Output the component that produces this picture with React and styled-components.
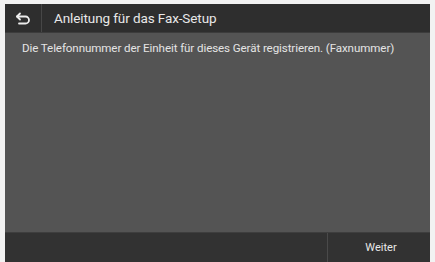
import styled, { createGlobalStyle } from "styled-components";

const GlobalStyle = createGlobalStyle`
  html, body {
    margin: 0;
    padding: 0;
    background: #f2f2f2;
  }
  body {
    font-family: Roboto, "Liberation Sans", sans-serif;
  }
`;

const Frame = styled.div`
  width: 435px;
  height: 262px;
  box-sizing: border-box;
  padding: 4px 5px 0 5px;
  display: flex;
`;

const Screen = styled.div`
  flex: 1;
  display: flex;
  flex-direction: column;
  background: #545454;
  overflow: hidden;
`;

const Header = styled.div`
  height: 28px;
  display: flex;
  align-items: stretch;
  background: #2e2e2e;
  border-bottom: 1px solid #3c3c3c;
`;

const BackButton = styled.div`
  width: 36px;
  display: flex;
  align-items: center;
  justify-content: center;
  border-right: 1px solid #474747;
`;

const Title = styled.div`
  display: flex;
  align-items: center;
  padding-left: 12px;
  color: #e8e8e8;
  font-size: 13.5px;
  letter-spacing: -0.1px;
`;

const Body = styled.div`
  flex: 1;
  padding: 8px 17px;
  color: #e4e4e4;
  font-size: 11.6px;
  letter-spacing: -0.1px;
`;

const Footer = styled.div`
  height: 29px;
  display: flex;
  background: #323232;
  border-top: 1px solid #3e3e3e;
`;

const FooterSpacer = styled.div`
  flex: 1;
  border-right: 1px solid #4a4a4a;
`;

const FooterButton = styled.div`
  width: 102px;
  display: flex;
  align-items: center;
  justify-content: center;
  padding-left: 4px;
  box-sizing: border-box;
  color: #e8e8e8;
  font-size: 11px;
`;

function BackIcon() {
  return (
    <svg width="16" height="13" viewBox="0 0 16 13" fill="none">
      <path
        d="M2 4.5h8.5a3.5 3.5 0 0 1 0 7H4"
        stroke="#ececec"
        strokeWidth="1.8"
        strokeLinecap="round"
      />
      <path
        d="M5 1.5 2 4.5 5 7.5"
        stroke="#ececec"
        strokeWidth="1.8"
        strokeLinecap="round"
        strokeLinejoin="round"
      />
    </svg>
  );
}

export default function App() {
  return (
    <>
      <GlobalStyle />
      <Frame>
        <Screen>
          <Header>
            <BackButton>
              <BackIcon />
            </BackButton>
            <Title>Anleitung für das Fax-Setup</Title>
          </Header>
          <Body>
            Die Telefonnummer der Einheit für dieses Gerät registrieren.
            (Faxnummer)
          </Body>
          <Footer>
            <FooterSpacer />
            <FooterButton>Weiter</FooterButton>
          </Footer>
        </Screen>
      </Frame>
    </>
  );
}
